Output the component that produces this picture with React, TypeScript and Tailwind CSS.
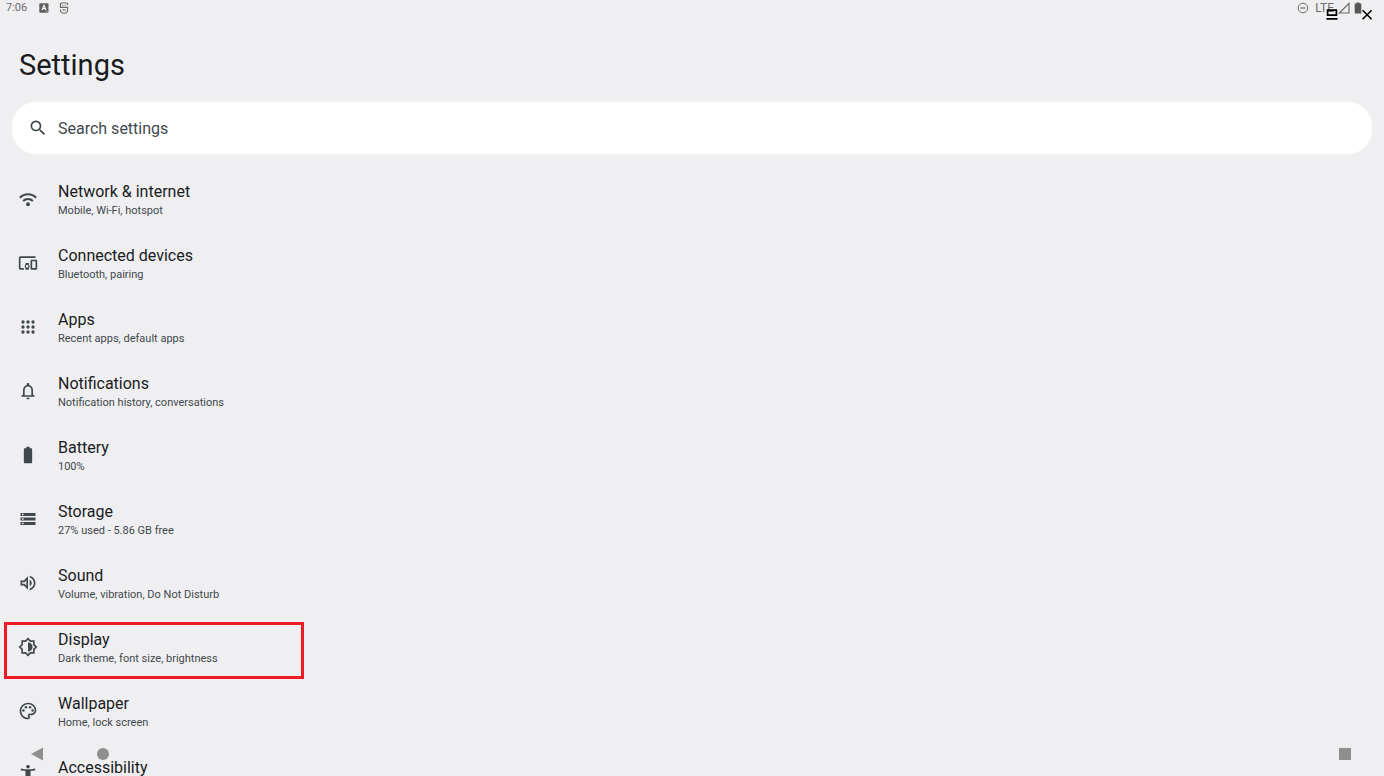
import type { ReactNode } from 'react'
import {
  MdBatteryFull,
  MdDevicesOther,
  MdOutlineBrightness6,
  MdOutlineNotifications,
  MdOutlinePalette,
  MdOutlineVolumeUp,
  MdSearch,
  MdStorage,
} from 'react-icons/md'

type SettingsItem = {
  title: string
  summary?: string
  icon: ReactNode
  highlighted?: boolean
}

function WifiIcon() {
  return (
    <svg viewBox="0 0 24 24" className="size-[18px]" fill="none" stroke="currentColor" strokeWidth="2.8">
      <path d="M1.2 10.2a15 15 0 0 1 21.6 0" />
      <path d="M5.5 14.7a9.2 9.2 0 0 1 13 0" />
      <circle cx="12" cy="19" r="2.6" fill="currentColor" stroke="none" />
    </svg>
  )
}

function AppsIcon() {
  return (
    <svg viewBox="0 0 24 24" className="size-5" fill="currentColor">
      {[6, 12, 18].map((cy) =>
        [6, 12, 18].map((cx) => <circle key={`${cx}-${cy}`} cx={cx} cy={cy} r="2" />)
      )}
    </svg>
  )
}

function AccessibilityIcon() {
  return (
    <svg viewBox="0 2 24 24" className="size-5" fill="currentColor">
      <circle cx="12" cy="4" r="2.1" />
      <path d="M20.4 6.2c-2.6.7-5.6 1-8.4 1s-5.8-.3-8.4-1l-.5 2c1.9.5 4 .8 5.9 1V22h2v-6h2v6h2V9.2c1.9-.2 4-.5 5.9-1Z" />
    </svg>
  )
}

const items: SettingsItem[] = [
  { title: 'Network & internet', summary: 'Mobile, Wi-Fi, hotspot', icon: <WifiIcon /> },
  { title: 'Connected devices', summary: 'Bluetooth, pairing', icon: <MdDevicesOther className="size-5" /> },
  { title: 'Apps', summary: 'Recent apps, default apps', icon: <AppsIcon /> },
  {
    title: 'Notifications',
    summary: 'Notification history, conversations',
    icon: <MdOutlineNotifications className="size-5" />,
  },
  { title: 'Battery', summary: '100%', icon: <MdBatteryFull className="size-5" /> },
  { title: 'Storage', summary: '27% used - 5.86 GB free', icon: <MdStorage className="size-[18px]" /> },
  {
    title: 'Sound',
    summary: 'Volume, vibration, Do Not Disturb',
    icon: <MdOutlineVolumeUp className="size-5" />,
  },
  {
    title: 'Display',
    summary: 'Dark theme, font size, brightness',
    icon: <MdOutlineBrightness6 className="size-5" />,
    highlighted: true,
  },
  { title: 'Wallpaper', summary: 'Home, lock screen', icon: <MdOutlinePalette className="size-5" /> },
  { title: 'Accessibility', icon: <AccessibilityIcon /> },
]

function StatusBar() {
  return (
    <header className="flex h-4 items-center justify-between pr-[22px] pl-1.5 text-[#6b6b6c]">
      <div className="flex items-center">
        <span className="w-[33px] text-[11px] leading-4">7:06</span>
        <svg viewBox="0 0 10 10" className="mr-2.5 size-2.5">
          <rect x="0.3" y="0.3" width="9.2" height="9.4" rx="1" fill="#606061" />
          <path d="M3 7 5 2.4 7 7M3.7 5.6h2.6" fill="none" stroke="#fff" strokeWidth="1.1" />
          <path d="M6.8 8.4h1.6" stroke="#fff" strokeWidth="0.6" />
        </svg>
        <svg viewBox="0 0 10 12" className="h-3 w-2.5" fill="none" stroke="currentColor" strokeWidth="1.1">
          <path d="M8.6 3V1.5Q5 .1 1.4 1.5V5.4H8.6V8Q8.6 11.2 5 11.2T1.4 8V7.6M3.2 3.2h1.1M5.7 3.2h1.1M3.2 8h3.6" />
        </svg>
      </div>
      <div className="flex items-center">
        <svg viewBox="0 0 12 12" className="mr-1.5 size-3" fill="none" stroke="currentColor">
          <circle cx="6" cy="6" r="4.8" />
          <path d="M3.4 6h5.2" strokeWidth="1.2" />
        </svg>
        <span className="text-[12px] leading-4">LTE</span>
        <svg viewBox="0 0 12 12" className="mx-1 size-3" fill="none" stroke="currentColor" strokeWidth="1.2">
          <path d="M1.4 11 11 1.4V11Z" />
        </svg>
        <svg viewBox="0 0 8 12" className="h-3 w-2" fill="#565657">
          <path d="M2.5.6h3v1h1.8v9.9H.7V1.6h1.8Z" />
        </svg>
      </div>
    </header>
  )
}

function WindowControls() {
  return (
    <div className="absolute top-2 right-[11px] flex items-start gap-[23px] text-black">
      <button type="button" aria-label="Restore">
        <svg viewBox="0 0 12 12" className="size-3" fill="none" stroke="currentColor" strokeWidth="1.7">
          <path d="M1.6 2.2h8.8v4.9H1.6ZM.4 10.8h11.2" />
        </svg>
      </button>
      <button type="button" aria-label="Close">
        <svg viewBox="0 0 12 12" className="size-3" fill="none" stroke="currentColor" strokeWidth="1.6">
          <path d="m1.6 2.3 9 9M10.6 2.3l-9 9" />
        </svg>
      </button>
    </div>
  )
}

function SettingsRow({ title, summary, icon, highlighted }: SettingsItem) {
  return (
    <li className="relative">
      <a href="#" className="flex h-16 px-[18px]">
        <span className="flex w-5 items-center justify-center pb-0.5 text-[#41484d]">{icon}</span>
        <span className="flex flex-col pt-3.5 pl-5">
          <span className="text-base leading-5 text-[#191c1e]">{title}</span>
          {summary && <span className="text-[11px] leading-[18px] text-[#41484d]">{summary}</span>}
        </span>
      </a>
      {highlighted && (
        <div className="pointer-events-none absolute top-1.5 left-1 h-[57px] w-[300px] border-3 border-[#ed1c24]" />
      )}
    </li>
  )
}

function NavigationBar() {
  return (
    <nav className="absolute inset-x-0 bottom-0 flex h-11 items-center pr-[33px] pl-[31px] text-[#8f8f90]">
      <button type="button" aria-label="Back">
        <svg viewBox="0 0 12 14" className="h-3.5 w-3" fill="currentColor">
          <path d="M12 .4v13.2L0 7Z" />
        </svg>
      </button>
      <button type="button" aria-label="Home" className="ml-[54px] size-3 rounded-full bg-current" />
      <button type="button" aria-label="Recent apps" className="ml-auto size-3 bg-current" />
    </nav>
  )
}

export default function App() {
  return (
    <div className="relative h-screen overflow-hidden bg-[#efeff1] font-[Roboto,sans-serif]">
      <StatusBar />
      <WindowControls />
      <main>
        <h1 className="px-[19px] pt-[29px] text-[29px] leading-10 text-[#191c1e]">Settings</h1>
        <label className="mx-3 mt-[17px] flex h-[52px] items-center gap-2.5 rounded-3xl bg-white px-4 text-[#41484d]">
          <MdSearch className="size-5" />
          <input
            type="text"
            aria-label="Search settings"
            placeholder="Search settings"
            className="min-w-0 flex-1 pt-0.5 text-base outline-none placeholder:text-[#41484d]"
          />
        </label>
        <ul className="mt-3.5">
          {items.map((item) => (
            <SettingsRow key={item.title} {...item} />
          ))}
        </ul>
      </main>
      <NavigationBar />
    </div>
  )
}
